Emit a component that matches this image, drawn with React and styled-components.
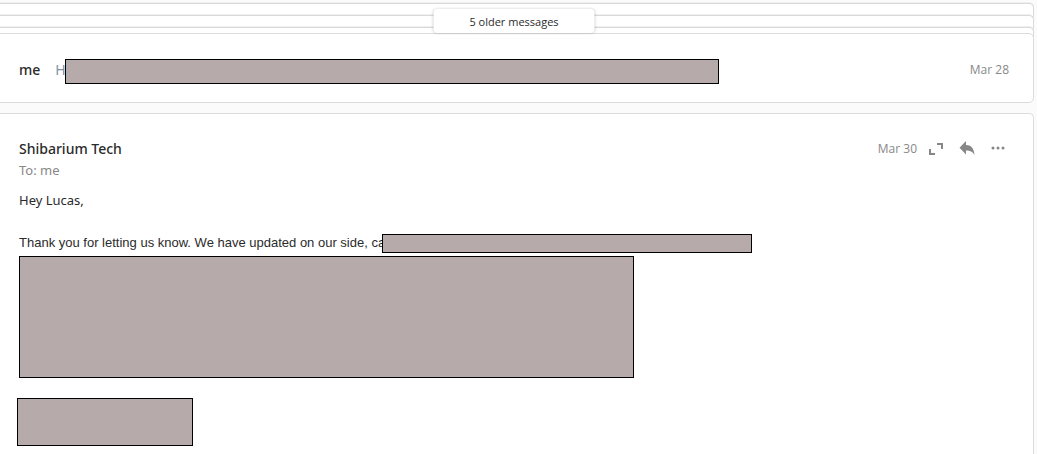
import React from "react";
import styled, { createGlobalStyle } from "styled-components";

const GlobalStyle = createGlobalStyle`
  * { box-sizing: border-box; }
  body {
    margin: 0;
    background: #fbfbfb;
    color: #2b2b2b;
    font-family: "Noto Sans", "Open Sans", sans-serif;
    font-size: 13px;
  }
`;

const Thread = styled.main`
  display: flex;
  flex-direction: column;
  min-height: 100vh;
  margin: 0 3px 0 -6px;
  padding-top: 3px;
`;

const Stack = styled.div`
  position: relative;
  height: 30px;
`;

const StackLayer = styled.div`
  height: 18px;
  margin-bottom: -6px;
  background: #fff;
  border: 1px solid #d9d9d9;
  border-bottom: 0;
  border-radius: 5px 5px 0 0;
  box-shadow: 0 -1px 0 #f0f0f0;
`;

const OlderButton = styled.button`
  position: absolute;
  z-index: 1;
  top: 6px;
  left: 50%;
  transform: translateX(-50%);
  width: 161px;
  height: 24px;
  padding: 0;
  border: 0;
  border-radius: 4px;
  background: #fff;
  box-shadow: 0 0 3px rgba(0, 0, 0, 0.2);
  color: #2b2b2b;
  font: 11px/26px "Open Sans", sans-serif;
`;

const Card = styled.article`
  position: relative;
  background: #fff;
  border: 1px solid #dcdcdc;
  border-radius: 5px;
  padding: 0 24px;
`;

const CollapsedCard = styled(Card)`
  display: flex;
  align-items: center;
  height: 70px;
  margin-bottom: 10px;
  padding-top: 3px;
`;

const OpenCard = styled(Card)`
  flex: 1;
  padding-top: 24px;
  padding-bottom: 8px;
  border-bottom: 0;
  border-radius: 5px 5px 0 0;
`;

const Sender = styled.h2`
  flex: ${(p) => (p.$grow ? 1 : "none")};
  margin: 0;
  font-size: 14px;
  font-weight: 500;
  line-height: 22px;
`;

const Snippet = styled.span`
  display: flex;
  flex: 1;
  align-items: center;
  margin-left: 15px;
  color: #8090a8;
  font-size: 14px;
  line-height: 22px;
`;

const DateText = styled.time`
  color: #888;
  font: 12px/20px "Open Sans", sans-serif;
`;

const Header = styled.header`
  display: flex;
  align-items: center;
  height: 22px;
`;

const Actions = styled.div`
  display: flex;
  gap: 11px;
  margin: 0 1px 0 9px;
`;

const IconButton = styled.button`
  display: flex;
  align-items: center;
  justify-content: center;
  width: 20px;
  height: 20px;
  padding: 0;
  border: 0;
  background: none;
  color: #878787;
`;

const Recipient = styled.p`
  margin: 0;
  color: #888;
  line-height: 20px;
`;

const Greeting = styled.p`
  margin: 10px 0 23px;
  line-height: 20px;
`;

const BodyLine = styled.p`
  display: flex;
  align-items: center;
  margin: 0 0 3px;
  font-family: "Liberation Sans", Arial, sans-serif;
  line-height: 20px;
`;

const Redaction = styled.span`
  display: block;
  flex: none;
  width: ${(p) => p.$width}px;
  height: ${(p) => p.$height}px;
  max-width: 100%;
  background: #b7aaaa;
  border: 1px solid #000;
`;

const SnippetRedaction = styled(Redaction)`
  margin: 4px 0 0 -1px;
`;

const LineRedaction = styled(Redaction)`
  margin-left: -3px;
`;

const Signature = styled.div`
  margin: 20px 0 0 -2px;
`;

export default function App() {
  return (
    <>
      <GlobalStyle />
      <Thread>
        <Stack>
          <StackLayer />
          <StackLayer />
          <StackLayer />
          <OlderButton type="button">5 older messages</OlderButton>
        </Stack>
        <CollapsedCard>
          <Sender>me</Sender>
          <Snippet>
            H<SnippetRedaction $width={654} $height={25} />
          </Snippet>
          <DateText>Mar 28</DateText>
        </CollapsedCard>
        <OpenCard>
          <Header>
            <Sender $grow>Shibarium Tech</Sender>
            <DateText>Mar 30</DateText>
            <Actions>
              <IconButton type="button" aria-label="Expand">
                <svg width="14" height="14" viewBox="0 0 14 14" fill="none" stroke="currentColor" strokeWidth="2">
                  <path d="M8 2h5v5M1 7v5h5" />
                </svg>
              </IconButton>
              <IconButton type="button" aria-label="Reply">
                <svg width="16" height="16" viewBox="0 0 16 16" fill="currentColor">
                  <path d="M7 0v4c5 0 8 3 8.500 10C13.500 10.500 11 9.500 7 9.500V13.500L0.500 6.800z" />
                </svg>
              </IconButton>
              <IconButton type="button" aria-label="More">
                <svg width="14" height="6" viewBox="0 0 14 6" fill="currentColor">
                  <circle cx="2" cy="2" r="1.500" />
                  <circle cx="7" cy="2" r="1.500" />
                  <circle cx="12" cy="2" r="1.500" />
                </svg>
              </IconButton>
            </Actions>
          </Header>
          <Recipient>To: me</Recipient>
          <Greeting>Hey Lucas,</Greeting>
          <BodyLine>
            Thank you for letting us know. We have updated on our side, ca
            <LineRedaction $width={370} $height={19} />
          </BodyLine>
          <Redaction $width={615} $height={122} />
          <Signature>
            <Redaction $width={176} $height={48} />
          </Signature>
        </OpenCard>
      </Thread>
    </>
  );
}
